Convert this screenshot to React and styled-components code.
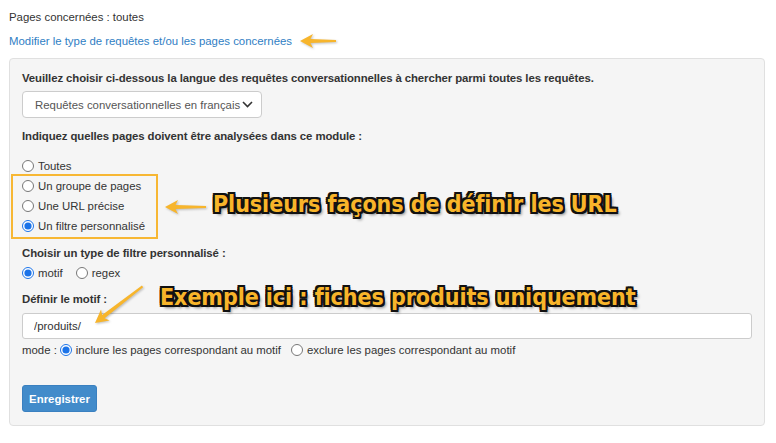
import React from 'react';
import styled, { createGlobalStyle } from 'styled-components';

const GlobalStyle = createGlobalStyle`
  body {
    margin: 0;
    background: #fff;
    font-family: "Liberation Sans", Arial, sans-serif;
    font-size: 11.4px;
    color: #333;
  }
`;

const Page = styled.div`
  position: relative;
  padding: 9px 12px 0 9px;
  width: 776px;
  box-sizing: border-box;
`;

const Line = styled.div`
  line-height: 17px;
  margin-bottom: 7px;
`;

const Link = styled.a`
  display: block;
  line-height: 17px;
  color: #2f7ec4;
  text-decoration: none;
  margin-bottom: 8px;
`;

const Well = styled.div`
  background: #f5f5f5;
  border: 1px solid #e0e0e0;
  border-radius: 4px;
  padding: 11px 11px 13px 12px;
  width: 756px;
  box-sizing: border-box;
`;

const Label = styled.div`
  font-weight: bold;
  letter-spacing: -0.1px;
  line-height: 17px;
  margin-bottom: ${p => p.$mb || 4}px;
`;

const SelectWrap = styled.div`
  position: relative;
  width: 240px;
  margin-bottom: 10px;
`;

const Select = styled.select`
  appearance: none;
  width: 100%;
  height: 27px;
  background: #fff;
  border: 1px solid #ccc;
  border-radius: 4px;
  padding: 0 12px;
  font: inherit;
  color: #555;
`;

const Chevron = styled.svg`
  position: absolute;
  right: 9px;
  top: 10px;
  pointer-events: none;
`;

const RadioList = styled.div`
  display: flex;
  flex-direction: column;
  margin: 0 0 9px;
`;

const RadioRow = styled.label`
  display: flex;
  align-items: center;
  gap: 2px;
  height: 20px;
  line-height: 20px;
`;

const Radio = styled.input.attrs({ type: 'radio' })`
  margin: 0 2px 0 0;
  width: 12px;
  height: 12px;
  accent-color: #1b73e8;
`;

const Inline = styled.div`
  display: flex;
  align-items: center;
  height: 20px;
  margin-bottom: 8px;
`;

const InlineItem = styled.label`
  display: flex;
  align-items: center;
  gap: 2px;
  margin-right: ${p => p.$mr || 0}px;
`;

const TextInput = styled.input`
  display: block;
  width: 730px;
  height: 26px;
  box-sizing: border-box;
  border: 1px solid #ccc;
  border-radius: 3px;
  background: #fff;
  padding: 0 11px;
  font: inherit;
  color: #333;
  margin-top: 5px;
`;

const ModeLine = styled.div`
  display: flex;
  align-items: center;
  height: 17px;
  margin: 2px 0 27px;
`;

const ModeLabel = styled.span`
  margin-right: 3px;
`;

const Button = styled.button`
  height: 27px;
  width: 75px;
  border: 1px solid #3a80c0;
  border-radius: 3px;
  background: #428bca;
  color: #fff;
  font: bold 11.4px "Liberation Sans", Arial, sans-serif;
  padding: 0;
`;

const Callout = styled.div`
  position: absolute;
  left: ${p => p.$x}px;
  top: ${p => p.$y}px;
  border: 2px solid #f7b733;
  width: ${p => p.$w}px;
  height: ${p => p.$h}px;
  box-sizing: border-box;
`;

const Annotation = styled.div`
  position: absolute;
  left: ${p => p.$x}px;
  top: ${p => p.$y}px;
  white-space: nowrap;
  font-family: "DejaVu Sans", sans-serif;
  font-weight: bold;
  font-stretch: condensed;
  font-size: 23px;
  letter-spacing: -0.05px;
  line-height: 26px;
  color: #f8b52a;
  text-shadow:
    -2px -2px 0 #111, 2px -2px 0 #111, -2px 2px 0 #111, 2px 2px 0 #111,
    0 -2px 0 #111, 0 2px 0 #111, -2px 0 0 #111, 2px 0 0 #111,
    3px 3px 3px rgba(0, 0, 0, 0.45);
`;

const ArrowSvg = styled.svg`
  position: absolute;
  left: ${p => p.$x}px;
  top: ${p => p.$y}px;
  overflow: visible;
  filter: drop-shadow(1px 1px 1px rgba(0, 0, 0, 0.25));
`;

function Arrow({ x, y, len = 36, angle = 0 }) {
  const d = `M0 0 L13 -7 L10.5 -2 L${len} -1 L${len} 1 L10.5 2 L13 7 Z`;
  return (
    <ArrowSvg $x={x} $y={y} width="1" height="1">
      <path d={d} fill="#f7b52c" transform={`rotate(${angle})`} />
    </ArrowSvg>
  );
}

export default function App() {
  return (
    <Page>
      <GlobalStyle />
      <Line>Pages concernées : toutes</Line>
      <Link href="#">Modifier le type de requêtes et/ou les pages concernées</Link>

      <Well>
        <Label>Veuillez choisir ci-dessous la langue des requêtes conversationnelles à chercher parmi toutes les requêtes.</Label>
        <SelectWrap>
          <Select defaultValue="fr">
            <option value="fr">Requêtes conversationnelles en français</option>
          </Select>
          <Chevron width="11" height="7" viewBox="0 0 11 7">
            <path d="M1 1 L5.5 5.5 L10 1" fill="none" stroke="#333" strokeWidth="1.6" />
          </Chevron>
        </SelectWrap>

        <Label $mb={11}>Indiquez quelles pages doivent être analysées dans ce module :</Label>
        <RadioList>
          <RadioRow><Radio name="pages" />Toutes</RadioRow>
          <RadioRow><Radio name="pages" />Un groupe de pages</RadioRow>
          <RadioRow><Radio name="pages" />Une URL précise</RadioRow>
          <RadioRow><Radio name="pages" defaultChecked />Un filtre personnalisé</RadioRow>
        </RadioList>

        <Label $mb={1}>Choisir un type de filtre personnalisé :</Label>
        <Inline>
          <InlineItem $mr={13}><Radio name="type" defaultChecked />motif</InlineItem>
          <InlineItem><Radio name="type" />regex</InlineItem>
        </Inline>

        <Label $mb={0}>Définir le motif :</Label>
        <TextInput defaultValue="/produits/" />
        <ModeLine>
          <ModeLabel>mode :</ModeLabel>
          <InlineItem $mr={10}><Radio name="mode" defaultChecked />inclure les pages correspondant au motif</InlineItem>
          <InlineItem><Radio name="mode" />exclure les pages correspondant au motif</InlineItem>
        </ModeLine>

        <Button>Enregistrer</Button>
      </Well>

      <Arrow x={300} y={41} len={36} />
      <Callout $x={11} $y={174} $w={147} $h={65} />
      <Arrow x={165} y={207} len={41} />
      <Annotation $x={213} $y={191}>Plusieurs façons de définir les URL</Annotation>
      <Arrow x={95} y={323} len={60} angle={-37.6} />
      <Annotation $x={160} $y={284}>Exemple ici : fiches produits uniquement</Annotation>
    </Page>
  );
}
